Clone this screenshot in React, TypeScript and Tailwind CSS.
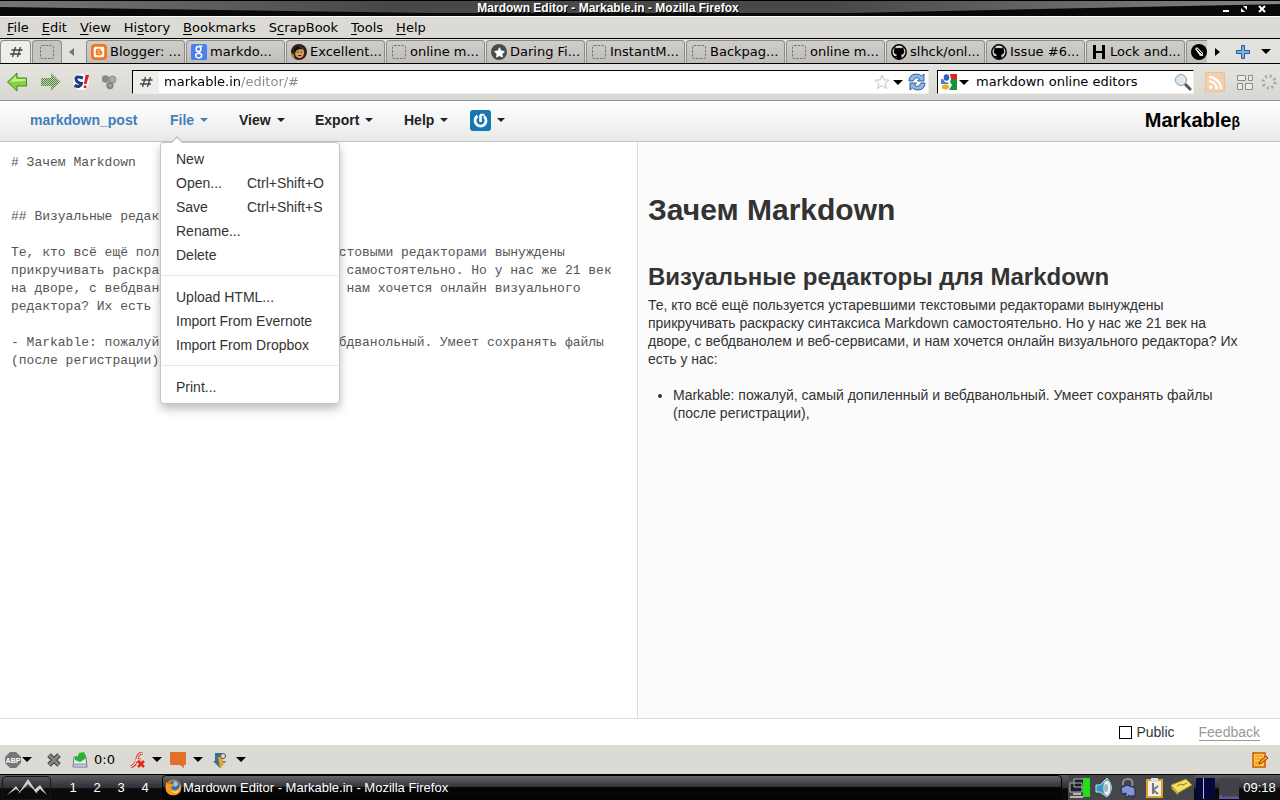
import { FaBlogger, FaStar, FaRss } from "react-icons/fa";
import type { ReactNode } from "react";

const menus = [
  ["", "F", "ile"],
  ["", "E", "dit"],
  ["", "V", "iew"],
  ["Hi", "s", "tory"],
  ["", "B", "ookmarks"],
  ["S", "c", "rapBook"],
  ["", "T", "ools"],
  ["", "H", "elp"],
];

function Caret({ className = "border-t-[#222]" }: { className?: string }) {
  return <span className={`inline-block border-x-4 border-t-4 border-x-transparent ${className}`} />;
}

function BigCaret() {
  return <span className="inline-block shrink-0 border-x-[5px] border-t-[5px] border-x-transparent border-t-black" />;
}

function Blank() {
  return (
    <svg className="size-4 shrink-0" viewBox="0 0 16 16" fill="none" stroke="#77756f">
      <rect x="1.5" y="1.5" width="13" height="13" rx="1.5" strokeDasharray="2.5 1.2" />
    </svg>
  );
}

function Hash() {
  return (
    <svg className="size-4 shrink-0" viewBox="0 0 16 16" fill="none" stroke="#444" strokeWidth="1.3">
      <path d="M7.500 3L4.500 13M12.500 3L9.500 13M3.500 6h11M2 10h11" />
    </svg>
  );
}

function GoogleTab() {
  return (
    <svg className="size-4 shrink-0" viewBox="0 0 16 16">
      <rect width="16" height="16" rx="1.5" fill="#4a80ee" />
      <g fill="none" stroke="#fff" strokeWidth="1.5">
        <ellipse cx="7.5" cy="5" rx="2.4" ry="2.6" />
        <ellipse cx="7.7" cy="11.6" rx="3" ry="2.3" />
        <path d="M8 2.2h3.4M9 7.4l-1.6 1.8" />
      </g>
    </svg>
  );
}

function Face() {
  return (
    <svg className="size-4 shrink-0" viewBox="0 0 16 16">
      <circle cx="8" cy="8" r="8" fill="#2f2114" />
      <ellipse cx="8.5" cy="8.5" rx="4.6" ry="5.8" fill="#d99a62" />
      <path d="M0 9q3-1 4 6Q1 13 0 9" fill="#9b8a2e" />
      <path d="M3 5q5-5 10 1l-3-1-4 1-2 3z" fill="#1b120c" />
      <path d="M6 8h1.6M9.6 8H11M7.2 11.5h3" stroke="#3b2013" />
    </svg>
  );
}

function Octocat() {
  return (
    <svg className="size-4 shrink-0" viewBox="0 0 16 16">
      <circle cx="8" cy="8" r="7.2" fill="#d5d4d1" stroke="#000" strokeWidth="1.5" />
      <path d="M3.500 3l2.300 1.200q2.200-.6 4.400 0L12.500 3l.2 2.700q1 1.300.3 3.200-.7 1.700-3 1.900.6.700.6 1.700v2.300q-2.600 1-5.200 0v-1.500q-1.900.3-2.700-1.600 1.500.8 2.800 0 0-.6.5-1-2.300-.2-3-1.900-.6-1.900.3-3.100z" />
    </svg>
  );
}

const tabs: { title: string; icon: ReactNode }[] = [
  {
    title: "Blogger: ...",
    icon: (
      <span className="flex size-4 shrink-0 items-center justify-center rounded-sm bg-[#f5751d]">
        <FaBlogger className="size-3 text-white" />
      </span>
    ),
  },
  { title: "markdo...", icon: <GoogleTab /> },
  { title: "Excellent...", icon: <Face /> },
  { title: "online m...", icon: <Blank /> },
  {
    title: "Daring Fi...",
    icon: (
      <span className="flex size-4 shrink-0 items-center justify-center rounded-full bg-[#484c50]">
        <FaStar className="size-[11px] text-white" />
      </span>
    ),
  },
  { title: "InstantM...", icon: <Blank /> },
  { title: "Backpag...", icon: <Blank /> },
  { title: "online m...", icon: <Blank /> },
  { title: "slhck/onl...", icon: <Octocat /> },
  { title: "Issue #6...", icon: <Octocat /> },
  {
    title: "Lock and...",
    icon: (
      <svg className="size-4 shrink-0" viewBox="0 0 16 16">
        <path d="M2 1h3v6h6V1h3v14h-3V9H5v6H2z" />
      </svg>
    ),
  },
  {
    title: "",
    icon: (
      <svg className="size-4 shrink-0" viewBox="0 0 16 16">
        <circle cx="8" cy="8" r="8" />
        <path d="M4 5l2-2 6 6v3H9z" fill="#ddd" />
        <path d="M6 5l5 5" stroke="#000" />
      </svg>
    ),
  },
];

function TitleBar() {
  return (
    <div className="relative flex h-4 items-center justify-center overflow-hidden bg-[#4d4d4d] pr-16">
      <svg className="absolute inset-0 size-full" viewBox="0 0 1280 16" preserveAspectRatio="none">
        <defs>
          <linearGradient id="title-sheen">
            <stop offset="0" stopColor="#777" />
            <stop offset=".3" stopColor="#484848" />
            <stop offset=".65" stopColor="#484848" />
            <stop offset="1" stopColor="#858585" />
          </linearGradient>
        </defs>
        <rect width="1280" height="16" fill="url(#title-sheen)" />
        <path d="M0 7L430 13H850L1280 4V16H0z" fill="#090909" />
        <path d="M0 0H1280V1H0z" />
      </svg>
      <span className="relative font-['Liberation_Sans'] text-xs leading-4 font-bold text-white [text-shadow:1px_1px_0_#000]">
        Mardown Editor - Markable.in - Mozilla Firefox
      </span>
      <div className="absolute top-[5px] right-[14px] flex gap-[10px] text-white">
        <button aria-label="Minimize" className="size-2">
          <svg viewBox="0 0 8 8"><path d="M1 5h6v2H1z" fill="#fff" /></svg>
        </button>
        <button aria-label="Restore" className="size-2">
          <svg viewBox="0 0 8 8"><path d="M3 1h4v4zM1 3v4h4z" fill="#fff" /></svg>
        </button>
        <button aria-label="Close" className="size-2">
          <svg viewBox="0 0 8 8"><path d="M1 1l6 6M7 1L1 7" stroke="#fff" strokeWidth="2" /></svg>
        </button>
      </div>
    </div>
  );
}

function MenuBar() {
  return (
    <nav className="flex h-[22px] items-center gap-[13px] border-t border-white bg-[#dcdad5] px-[7px]">
      {menus.map(([before, key, after]) => (
        <button key={before + key + after} className="leading-5">
          {before}
          <span className="underline underline-offset-2">{key}</span>
          {after}
        </button>
      ))}
    </nav>
  );
}

function TabStrip() {
  return (
    <div className="flex h-[26px] border-y border-black bg-[#e3e1dd] pt-px">
      <button aria-label="Markable" className="flex w-[31px] items-center justify-center rounded-t border border-b-0 border-[#8d8b86] bg-[#eeedea]">
        <Hash />
      </button>
      <button aria-label="Untitled" className="ml-px flex w-[30px] items-center justify-center rounded-t border border-b-0 border-[#8d8b86] bg-[#c6c4c0]">
        <Blank />
      </button>
      <button aria-label="Scroll tabs left" className="flex w-6 items-center pl-[7px]">
        <span className="border-y-4 border-r-[5px] border-y-transparent border-r-[#77756f]" />
      </button>
      <div className="flex min-w-0 flex-1 overflow-hidden">
        {tabs.map((tab, i) => (
          <button
            key={i}
            className="mr-px flex w-[99px] shrink-0 items-center gap-[3px] rounded-t border border-b-0 border-[#8d8b86] bg-linear-to-b from-[#d0cecb] to-[#bfbdb9] pl-1 text-left whitespace-nowrap"
          >
            {tab.icon}
            <span>{tab.title}</span>
          </button>
        ))}
      </div>
      <div className="flex w-[73px] items-center justify-between pr-[9px] pl-2">
        <button aria-label="Scroll tabs right" className="border-y-4 border-l-[5px] border-y-transparent border-l-black" />
        <button aria-label="New tab">
          <svg className="ml-1 size-4" viewBox="0 0 16 16">
            <path d="M6.5 1.5h3v5h5v3h-5v5h-3v-5h-5v-3h5z" fill="#7eb0e5" stroke="#265b9c" />
          </svg>
        </button>
        <button aria-label="List all tabs" className="flex"><BigCaret /></button>
      </div>
    </div>
  );
}

function GoogleG() {
  return (
    <svg className="size-4 shrink-0" viewBox="0 0 16 16">
      <path d="M9 0h7v5h-6z" fill="#e2201c" />
      <path d="M10 5h6v11H8l3-5-2-3z" fill="#19913a" />
      <ellipse cx="5.500" cy="3.500" rx="2.800" ry="3.300" fill="#2a5fc4" />
      <path d="M0 5h2l2 3 4 1-1 1H0z" fill="#4a7dd8" />
      <ellipse cx="4.500" cy="13" rx="3.700" ry="2.400" fill="#f2ae18" />
    </svg>
  );
}

function NavBar() {
  return (
    <div className="flex h-[37px] items-center border-b border-[#98968f] bg-linear-to-b from-[#e5e4e0] to-[#d9d7d1] pl-[7px]">
      <button aria-label="Back">
        <svg className="h-5 w-[21px]" viewBox="0 0 21 20">
          <path d="M.5 10L10 1v5h9.500v8H10v5z" fill="#82d43b" stroke="#3f8f17" strokeLinejoin="round" />
          <path d="M3 10l6-6v3h9.500v2z" fill="#c3f08f" />
        </svg>
      </button>
      <button aria-label="Forward" className="ml-3">
        <svg className="h-5 w-[21px]" viewBox="0 0 21 20">
          <defs>
            <pattern id="dither" width="2" height="2" patternUnits="userSpaceOnUse">
              <rect width="2" height="2" fill="#b9d5a3" />
              <path d="M0 0h1v1H0zM1 1h1v1H1z" fill="#5b8546" />
            </pattern>
          </defs>
          <path d="M20.500 10L11 1v5H1v8h10v5z" fill="url(#dither)" />
        </svg>
      </button>
      <button aria-label="Stylish" className="ml-3">
        <svg className="size-4" viewBox="0 0 16 16">
          <circle cx="8" cy="8" r="8" fill="#fff" />
          <path d="M10 4Q3 1.500 3 5T8.500 9.500Q7.500 14 1.500 11.500" fill="none" stroke="#1e3c86" strokeWidth="3" />
          <path d="M12.500 1H16l-2.500 9H11zM10.800 11.500h2.500V14h-2.500z" fill="#dd1c1c" />
        </svg>
      </button>
      <button aria-label="Add-on" className="ml-3">
        <svg className="size-4" viewBox="0 0 16 16">
          <circle cx="4.500" cy="5" r="3.700" fill="#898989" />
          <circle cx="11.500" cy="5.500" r="3.500" fill="#aaa" stroke="#8a8a8a" />
          <circle cx="9" cy="11.500" r="3.700" fill="#858585" />
          <circle cx="9" cy="11.500" r="1.500" fill="#aaa" />
        </svg>
      </button>
      <div className="ml-[15px] flex h-6 min-w-0 flex-1 items-center border border-t-black border-r-[#eee] border-b-[#eee] border-l-black bg-white">
        <span className="flex h-full w-[26px] items-center justify-center bg-[#efeeec]"><Hash /></span>
        <input
          aria-label="Location"
          defaultValue="markable.in/editor/#"
          className="min-w-0 flex-1 bg-[linear-gradient(to_right,#000_82px,#888_82px)] bg-clip-text pl-[5px] text-transparent outline-none"
        />
        <svg className="size-4" viewBox="0 0 16 16">
          <path d="M8 1l2 5h5l-4 3.500 1.500 5L8 11.500 3.500 14.500 5 9.500 1 6h5z" fill="#fff" stroke="#c4c4c4" />
        </svg>
        <button aria-label="History" className="ml-[3px] flex"><BigCaret /></button>
        <button aria-label="Reload" className="mr-[2px] ml-[5px]">
          <svg className="size-[18px]" viewBox="0 0 18 18" fill="#8fb8e6" stroke="#2e5f9f" strokeLinejoin="round">
            <path d="M1 8Q1 1.500 8 1q3.500 0 5.500 2L16 1v7H9.500l2-2Q8 2.500 5 8z" />
            <path d="M17 10q0 6.500-7 7-3.500 0-5.500-2L2 17v-7h6.500l-2 2q3.500 3.500 6.500-2z" />
          </svg>
        </button>
      </div>
      <div className="ml-2 flex h-6 w-[257px] items-center border border-t-black border-r-[#eee] border-b-[#eee] border-l-black bg-white pl-[3px]">
        <GoogleG />
        <button aria-label="Search engine" className="ml-[2px] flex"><BigCaret /></button>
        <input aria-label="Search" defaultValue="markdown online editors" className="ml-[7px] min-w-0 flex-1 bg-transparent outline-none" />
        <svg className="mr-px size-[18px]" viewBox="0 0 18 18">
          <path d="M11 11l5 5" stroke="#555" strokeWidth="3" strokeLinecap="round" />
          <circle cx="7" cy="7" r="5.500" fill="#dce8f2" stroke="#999" />
        </svg>
      </div>
      <span className="ml-[11px] flex size-5 items-center justify-center border border-[#efc095] bg-[#f3cfad]">
        <FaRss className="size-[15px] text-white" />
      </span>
      <svg className="ml-3 size-4" viewBox="0 0 16 16" fill="#ecebe8" stroke="#8e8c88">
        <path d="M.5 1.500h8v5h-8zM11.500 1.500h4v5h-4zM.5 9.500h5v6h-5zM8.500 9.500h7v6h-7z" />
      </svg>
      <svg className="mr-[3px] ml-2 size-4" viewBox="0 0 16 16">
        <circle cx="8" cy="8" r="6" fill="none" stroke="#aaa8a3" strokeWidth="3" strokeDasharray="2 2.712" />
      </svg>
    </div>
  );
}

function FileMenu() {
  const item = "flex w-full px-[15px] text-left leading-6 whitespace-nowrap";
  return (
    <div className="absolute top-8 -left-[10px] z-10 w-[180px] rounded border border-[#c4c4c4] bg-white py-1 text-sm font-normal text-[#333] shadow-[0_5px_10px_rgba(0,0,0,0.25)]">
      <span className="absolute -top-[5px] left-3 size-2 rotate-45 border-t border-l border-[#b5b5b5] bg-white" />
      <button className={item}>New</button>
      <button className={item}><span className="w-[71px]">Open...</span>Ctrl+Shift+O</button>
      <button className={item}><span className="w-[71px]">Save</span>Ctrl+Shift+S</button>
      <button className={item}>Rename...</button>
      <button className={item}>Delete</button>
      <hr className="mx-px mt-2 mb-[9px] border-[#e5e5e5]" />
      <button className={item}>Upload HTML...</button>
      <button className={item}>Import From Evernote</button>
      <button className={item}>Import From Dropbox</button>
      <hr className="mx-px mt-2 mb-[9px] border-[#e5e5e5]" />
      <button className={item}>Print...</button>
    </div>
  );
}

function AppHeader() {
  return (
    <header className="flex h-[41px] items-center border-b border-[#c4c4c4] bg-linear-to-b from-white to-[#e9e9e9] pr-10 pb-[2px] pl-[30px] font-['Liberation_Sans'] text-sm font-bold text-[#222]">
      <a href="#" className="w-[140px] text-[#427fb9]">markdown_post</a>
      <div className="relative w-[69px]">
        <button className="flex items-center gap-[6px] text-[#427fb9]">File <Caret className="border-t-[#427fb9]" /></button>
        <FileMenu />
      </div>
      <button className="flex w-[76px] items-center gap-[6px]">View <Caret /></button>
      <button className="flex w-[89px] items-center gap-[6px]">Export <Caret /></button>
      <button className="flex w-[66px] items-center gap-[6px]">Help <Caret /></button>
      <button aria-label="Account" className="flex items-center gap-[6px]">
        <svg className="size-[21px]" viewBox="0 0 21 21">
          <rect width="21" height="21" rx="3" fill="#1678b2" />
          <path d="M7.500 6a5.500 5.500 0 1 0 6.500.3" fill="none" stroke="#fff" strokeWidth="2.800" />
          <path d="M10.500 5v7" stroke="#fff" strokeWidth="2.600" />
          <path d="M10 4.800h4.500" stroke="#fff" strokeWidth="2" />
        </svg>
        <Caret />
      </button>
      <a href="#" className="ml-auto flex items-baseline text-xl text-black">
        Markable<span className="text-sm">β</span>
      </a>
    </header>
  );
}

const source = `# Зачем Markdown


## Визуальные редакторы для Markdown

Те, кто всё ещё пользуется устаревшими текстовыми редакторами вынуждены
прикручивать раскраску синтаксиса Markdown самостоятельно. Но у нас же 21 век
на дворе, с вебдванолем и веб-сервисами, и нам хочется онлайн визуального
редактора? Их есть у нас:

- Markable: пожалуй, самый допиленный и вебдванольный. Умеет сохранять файлы
(после регистрации),`;

function Preview() {
  return (
    <article className="min-w-0 flex-1 bg-[#fbfbfb] pt-[50px] pr-6 pl-[10px] text-sm leading-[18px] text-[#333]">
      <h1 className="text-[30px] leading-9 font-bold">Зачем Markdown</h1>
      <h2 className="mt-[31px] text-[24px] leading-9 font-bold">Визуальные редакторы для Markdown</h2>
      <p className="mt-px">
        Те, кто всё ещё пользуется устаревшими текстовыми редакторами вынуждены
        <br />
        прикручивать раскраску синтаксиса Markdown самостоятельно. Но у нас же 21 век на
        <br />
        дворе, с вебдванолем и веб-сервисами, и нам хочется онлайн визуального редактора? Их
        <br />
        есть у нас:
      </p>
      <ul className="mt-[18px] list-disc pl-[25px]">
        <li>
          Markable: пожалуй, самый допиленный и вебдванольный. Умеет сохранять файлы
          <br />
          (после регистрации),
        </li>
      </ul>
    </article>
  );
}

function AddonBar() {
  return (
    <div className="flex h-[29px] items-center bg-[#dcdad5] pl-[5px]">
      <svg className="size-4" viewBox="0 0 16 16">
        <path d="M5 0h6l5 5v6l-5 5H5l-5-5V5z" fill="#777" />
        <text x="8" y="11" textAnchor="middle" fill="#fff" fontFamily="Liberation Sans" fontWeight="bold" fontSize="7">ABP</text>
      </svg>
      <button aria-label="Adblock menu" className="ml-px flex"><BigCaret /></button>
      <svg className="ml-[14px] size-4" viewBox="0 0 16 16">
        <path d="M3 3l10 10M13 3L3 13" stroke="#3d3d3d" strokeWidth="5" />
        <path d="M3 3l10 10M13 3L3 13" stroke="#858585" strokeWidth="3" />
      </svg>
      <svg className="ml-[10px] size-4" viewBox="0 0 16 16">
        <path d="M2 5h12l1 10H1z" fill="#e5eaf0" stroke="#6a7687" />
        <path d="M2 12.500h12" stroke="#9ba9bd" strokeWidth="2" />
        <path d="M3 5l3-1 1-3 5-1 2 4-1 3-5 3-5-2z" fill="#26b52c" />
      </svg>
      <span className="ml-[6px] w-[36px]">0:0</span>
      <svg className="size-4" viewBox="0 0 16 16">
        <path d="M13 1Q8 1 7 7T1 15M5 8h6" fill="none" stroke="#d8452d" strokeWidth="3" />
        <path d="M13 1Q8 1 7 7T1 15M5 8h6" fill="none" stroke="#fff" />
        <path d="M8 9l6 6M14 9l-6 6" stroke="#d92a16" strokeWidth="2.500" />
      </svg>
      <button aria-label="Flash menu" className="ml-[6px] flex"><BigCaret /></button>
      <svg className="ml-2 size-4" viewBox="0 0 16 16">
        <path d="M1 0h14q1 0 1 1v11q0 1-1 1h-1v3l-4-3H1q-1 0-1-1V1q0-1 1-1" fill="#e0702a" />
      </svg>
      <button aria-label="Comments menu" className="ml-[7px] flex"><BigCaret /></button>
      <svg className="ml-[9px] size-4" viewBox="0 0 16 16">
        <path d="M3 1h7v8h4l-6 7-7-7h2z" fill="#37718b" />
        <path d="M6 5h5v5h3l-6 6z" fill="#e3a72d" />
        <circle cx="11" cy="4" r="2.500" fill="#ddd" stroke="#555" />
      </svg>
      <button aria-label="Download menu" className="ml-2 flex"><BigCaret /></button>
      <svg className="mr-3 ml-auto size-4" viewBox="0 0 16 16">
        <path d="M1 1h12v14H1z" fill="#ffd23d" stroke="#d2500f" strokeWidth="1.500" />
        <path d="M3 4h8M3 7h8M3 10h5M3 12h5" stroke="#e07e16" />
        <path d="M7 12l1-3 6-5 2 2-6 5z" fill="#ff9d1e" stroke="#a83508" />
      </svg>
    </div>
  );
}

function Tray() {
  return (
    <div className="flex h-full items-center bg-[#45464a]">
      <svg className="h-6 w-[126px]" viewBox="0 0 126 24">
        <path d="M6 3h10v8H6zM2 7h12v9H2z" fill="#18202c" stroke="#b5b5b5" />
        <path d="M5 18h8M2 21h13" stroke="#ddd" strokeWidth="1.500" />
        <path d="M15 2h7v19h-7z" fill="#23df18" />
        <path d="M28 9h4l7-7q9 10 0 19l-7-5h-4z" fill="#2f9ac4" stroke="#b9e5f2" />
        <ellipse cx="39" cy="12" rx="4" ry="8" fill="#e4ecef" stroke="#7ba3b1" />
        <ellipse cx="38" cy="12" rx="2" ry="4" fill="#9fb4bd" />
        <path d="M55 9q-1-6 5-6t4 7" fill="none" stroke="#8a8f98" strokeWidth="2" />
        <path d="M53 12l6-3 8 3v9l-3-2v3l-3-3-3 3v-5l-4 1z" fill="#8194d8" stroke="#22284a" />
        <path d="M79 4h15v17H79z" fill="#f2efe8" stroke="#e19f28" strokeWidth="2" />
        <path d="M83 2h7v4h-7z" fill="#ddd" />
        <path d="M85 7v11M90 10l-5 4 5 4" fill="none" stroke="#777" strokeWidth="2" />
        <path d="M103 9l15-6 6 6-14 8z" fill="#f3df64" stroke="#9c8421" />
        <path d="M103 9l7 7v3l-6-6z" fill="#cbb03a" />
        <path d="M109 10l4-2 2 1 4-2" fill="none" stroke="#8d7926" />
      </svg>
    </div>
  );
}

function Firefox() {
  return (
    <svg className="size-[17px] shrink-0" viewBox="0 0 17 17">
      <circle cx="8.500" cy="8.500" r="8" fill="#e8731a" />
      <circle cx="9.500" cy="7" r="5.200" fill="#2f6fb5" />
      <path d="M9 2q4 0 4 4l-3 2-2-2z" fill="#8cc6ea" />
      <path d="M1 3l2 2q2-1 4 0l2 2-3 1q1 4 5 3 4-1 4-6 2 5-1 8.500-3 3-7 2.500Q1 15 .5 9z" fill="#f59a22" />
      <path d="M15 5q1 5-3 7-4 1-6-1 2 4 6 3 4-2 3-9z" fill="#ffd34a" />
    </svg>
  );
}

function Taskbar() {
  return (
    <footer className="flex h-[26px] items-stretch border-t border-black bg-linear-to-b from-[#5b5c61] from-0% via-[#303136] via-50% to-[#0b0b0c] to-55% font-['Liberation_Sans'] text-white">
      <button aria-label="Start" className="mt-px ml-[2px] w-[49px] rounded-sm border border-[#161616]">
        <svg className="h-[22px] w-[47px]" viewBox="0 0 47 22" fill="#d0d0d0">
          <path d="M4 18l9-9 5 7-5-4z" />
          <path d="M15 17L25 2l10 15-10-10z" />
          <path d="M31 13l6-5 7 10-7-6-4 4z" />
        </svg>
      </button>
      <div className="ml-[10px] flex items-center text-[13px]">
        {["1", "2", "3", "4"].map((n) => (
          <button key={n} className="w-6">{n}</button>
        ))}
      </div>
      <button className="ml-[5px] flex min-w-0 flex-1 items-center gap-px rounded-sm border border-black bg-linear-to-b from-[#67676a] from-0% via-[#303033] via-50% to-[#050505] to-50% pl-[2px] text-[13px]">
        <Firefox />
        Mardown Editor - Markable.in - Mozilla Firefox
      </button>
      <div className="ml-[6px]"><Tray /></div>
      <svg className="ml-[2px] h-[25px] w-[43px]" viewBox="0 0 43 25">
        <path d="M0 3h19v21H0z" fill="#05083a" />
        <path d="M7.500 3v21" stroke="#b5b8d5" />
        <path d="M23 3h20v21H23z" fill="#414147" />
        <path d="M23 22l2-3 2 3 4-1 3 1 5-1 4 1v2H23z" fill="#5a559c" />
      </svg>
      <span className="w-[41px] self-center text-center text-[13px]">09:18</span>
    </footer>
  );
}

export default function App() {
  return (
    <div className="flex min-h-screen flex-col overflow-hidden bg-white font-['DejaVu_Sans',sans-serif] text-[13px] leading-5 text-black">
      <TitleBar />
      <MenuBar />
      <TabStrip />
      <NavBar />
      <AppHeader />
      <main className="flex flex-1 font-['Liberation_Sans',sans-serif]">
        <textarea
          aria-label="Markdown source"
          defaultValue={source}
          spellCheck={false}
          className="w-1/2 max-w-[638px] resize-none border-r border-[#ddd] bg-white pt-3 pl-[11px] font-['Liberation_Mono',monospace] text-[13px] leading-[18px] text-[#555] outline-none"
        />
        <Preview />
      </main>
      <div className="flex h-[27px] items-center justify-end border-t border-[#ddd] pr-5 font-['Liberation_Sans',sans-serif] text-sm text-[#333]">
        <label className="flex items-center gap-1">
          <input type="checkbox" className="size-[13px] appearance-none border border-black bg-white" />
          Public
        </label>
        <a href="#" className="ml-6 border-b border-[#999] leading-4 text-[#999]">Feedback</a>
      </div>
      <AddonBar />
      <Taskbar />
    </div>
  );
}
